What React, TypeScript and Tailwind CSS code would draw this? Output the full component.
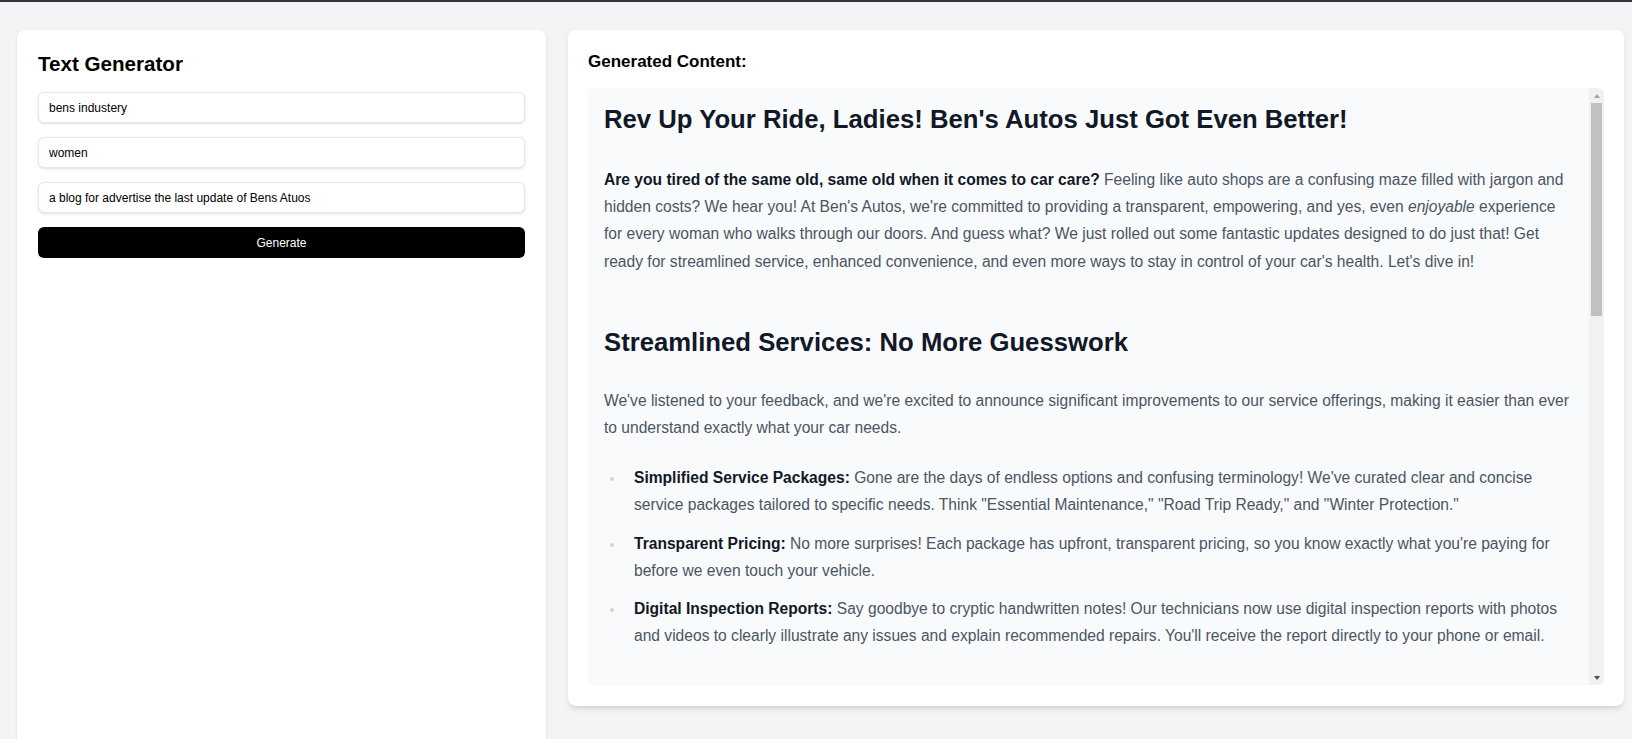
import React from 'react'

const inputClass =
  'block w-full h-[31px] rounded-md border border-[#e5e7eb] bg-white px-[10px] text-[12px] text-black shadow-sm outline-none'

const headingClass = 'text-[25.7px] font-bold leading-[30px] text-[#111827]'

function Bullet({ label, children }: { label: string; children: React.ReactNode }) {
  return (
    <li className="flex items-start gap-[20px]">
      <span className="mt-[13px] h-[4px] w-[4px] shrink-0 rounded-full bg-[#d1d5db]" />
      <div>
        <strong className="font-bold text-[#111827]">{label}</strong> {children}
      </div>
    </li>
  )
}

function GeneratorForm() {
  return (
    <div className="h-[716px] w-[529px] shrink-0 rounded-lg bg-white px-[21px] py-5 shadow-sm">
      <h1 className="mb-[14px] text-[20.6px] font-bold leading-[28px] text-black">Text Generator</h1>
      <div className="flex flex-col gap-[14px]">
        <input className={inputClass} defaultValue="bens industery" />
        <input className={inputClass} defaultValue="women" />
        <input className={inputClass} defaultValue="a blog for advertise the last update of Bens Atuos" />
        <button className="h-[31px] w-full rounded-md bg-black text-[12px] text-white">Generate</button>
      </div>
    </div>
  )
}

function Article() {
  return (
    <div className="pb-[16px] text-[15.6px] leading-[27.2px] text-[#4b5563]">
      <h1 className={headingClass}>Rev Up Your Ride, Ladies! Ben's Autos Just Got Even Better!</h1>
      <p className="mt-[32px]">
        <strong className="font-bold text-[#111827]">
          Are you tired of the same old, same old when it comes to car care?
        </strong>{' '}
        Feeling like auto shops are a confusing maze filled with jargon and hidden costs? We hear you! At Ben's
        Autos, we're committed to providing a transparent, empowering, and yes, even <em>enjoyable</em> experience
        for every woman who walks through our doors. And guess what? We just rolled out some fantastic updates
        designed to do just that! Get ready for streamlined service, enhanced convenience, and even more ways to
        stay in control of your car's health. Let's dive in!
      </p>

      <h2 className={`mt-[52px] ${headingClass}`}>Streamlined Services: No More Guesswork</h2>
      <p className="mt-[30px]">
        We've listened to your feedback, and we're excited to announce significant improvements to our service
        offerings, making it easier than ever to understand exactly what your car needs.
      </p>
      <ul className="mt-[23px] flex flex-col gap-[11px] pl-[6px]">
        <Bullet label="Simplified Service Packages:">
          Gone are the days of endless options and confusing terminology! We've curated clear and concise service
          packages tailored to specific needs. Think "Essential Maintenance," "Road Trip Ready," and "Winter
          Protection."
        </Bullet>
        <Bullet label="Transparent Pricing:">
          No more surprises! Each package has upfront, transparent pricing, so you know exactly what you're paying
          for before we even touch your vehicle.
        </Bullet>
        <Bullet label="Digital Inspection Reports:">
          Say goodbye to cryptic handwritten notes! Our technicians now use digital inspection reports with photos
          and videos to clearly illustrate any issues and explain recommended repairs. You'll receive the report
          directly to your phone or email.
        </Bullet>
      </ul>

      <h2 className={`mt-[52px] ${headingClass}`}>Enhanced Convenience: Car Care That Fits Your Life</h2>
      <p className="mt-[30px]">
        We know your time is precious. That's why we've made it simpler than ever to fit car maintenance into your
        busy schedule.
      </p>
    </div>
  )
}

// classic scrollbar look, drawn beside the clipped article
function Scrollbar() {
  return (
    <div className="flex w-[15px] shrink-0 flex-col bg-[#f1f1f1]">
      <div className="flex h-[15px] items-center justify-center">
        <span className="h-0 w-0 border-x-[3.5px] border-b-[4px] border-x-transparent border-b-[#a3a3a3]" />
      </div>
      <div className="flex-1">
        <div className="mx-[2px] h-[213px] bg-[#c1c1c1]" />
      </div>
      <div className="flex h-[15px] items-center justify-center">
        <span className="h-0 w-0 border-x-[3.5px] border-t-[4px] border-x-transparent border-t-[#505050]" />
      </div>
    </div>
  )
}

function ContentPanel() {
  return (
    <div className="flex-1 rounded-lg bg-white px-5 pt-5 pb-[21px] shadow-md">
      <h2 className="mb-[14px] text-[17px] font-bold leading-[24px] text-black">Generated Content:</h2>
      <div className="flex h-[597px] overflow-hidden rounded-md bg-[#f9fafb]">
        <div className="min-w-0 flex-1 overflow-hidden px-4 pt-4">
          <Article />
        </div>
        <Scrollbar />
      </div>
    </div>
  )
}

export default function App() {
  return (
    <div className="h-screen overflow-hidden bg-[#f3f4f6] font-['Liberation_Sans',Arial,sans-serif]">
      <div className="h-[2px] bg-[#35313f]" />
      <div className="flex items-start gap-[22px] pt-[28px] pl-[17px] pr-[8px]">
        <GeneratorForm />
        <ContentPanel />
      </div>
    </div>
  )
}
